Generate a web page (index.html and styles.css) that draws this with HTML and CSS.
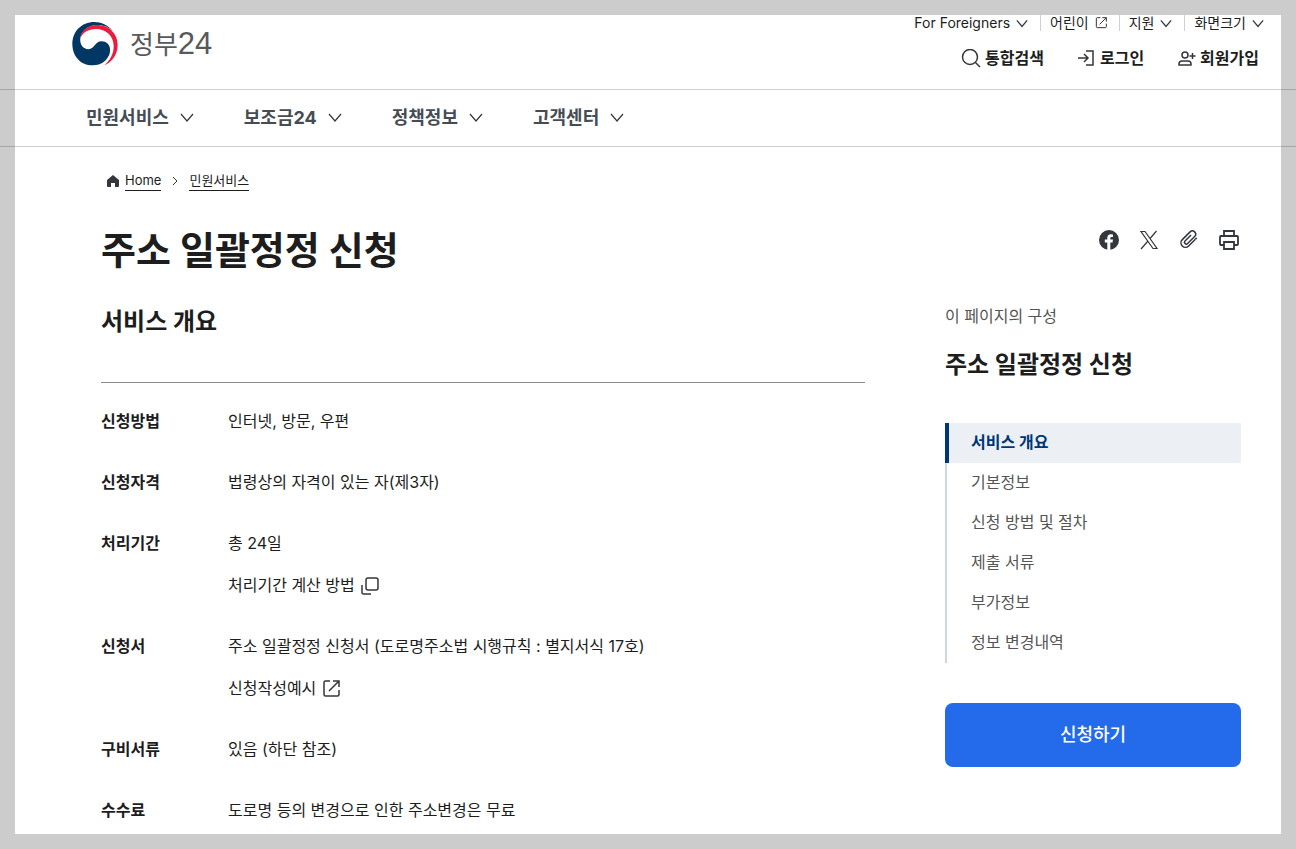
FILE: index.html
```html
<!DOCTYPE html>
<html lang="ko">

<head>
    <meta charset="UTF-8" />
    <meta name="viewport" content="width=device-width, initial-scale=1.0" />
    <title>주소 일괄정정 신청 | 정부24</title>
    <link rel="stylesheet" href="styles.css">
</head>

<body>
    <!-- Shared icons -->
    <svg class="sprite" aria-hidden="true">
        <symbol id="chevron" viewBox="0 0 14 14"><path d="M1 4l6 7 6-7" /></symbol>
        <symbol id="external" viewBox="0 0 18 18"><path d="M8 1H3.500Q2 1 2 2.500V14.500Q2 16 3.500 16H15.500Q17 16 17 14.500V10M11 1h6v6M17 1L7 11" /></symbol>
    </svg>

    <header class="header">
        <div class="header-top">
            <a href="#" class="logo">
                <svg class="logo-mark" viewBox="216 63 140 134" aria-hidden="true">
                    <path fill="#003764" d="M340 90C325 72 305 63 284 63C245 63 217 92 217 130C217 168 243 195 278 195C310 195 332 172 332 148C332 132 320 122 306 122C286 122 284 146 266 146C250 146 240 132 241 115C243 92 262 74 290 72C310 71 328 78 340 90Z" />
                    <path fill="#ed1c3e" d="M242 112C244 90 262 73 290 72C328 71 355 98 355 132C355 162 338 185 314 195C332 180 343 160 343 136C343 106 320 84 288 84C266 84 248 95 242 112Z" />
                </svg>
                <span class="logo-text">정부<span class="logo-num">24</span></span>
            </a>
            <div class="header-links">
                <div class="util">
                    <button type="button">For Foreigners <svg class="icon"><use href="#chevron" /></svg></button>
                    <a href="#">어린이 <svg class="icon"><use href="#external" /></svg></a>
                    <button type="button">지원 <svg class="icon"><use href="#chevron" /></svg></button>
                    <button type="button">화면크기 <svg class="icon"><use href="#chevron" /></svg></button>
                </div>
                <div class="account">
                    <button type="button"><svg class="icon search-icon" viewBox="0 0 20 20"><circle cx="9" cy="8" r="7.500" /><path d="M14.500 13.500L19 18" /></svg>통합검색</button>
                    <a href="#"><svg class="icon" viewBox="0 0 18 18"><path d="M0 8h10M6 4l4 4-4 4M8 1h7v14H8" /></svg>로그인</a>
                    <a href="#"><svg class="icon" viewBox="0 0 18 18"><circle cx="7" cy="5" r="3" /><path d="M1 15v-1Q1 11 4 11h6Q13 11 13 14v1zM14.500 3v6M11.500 6h6" /></svg>회원가입</a>
                </div>
            </div>
        </div>
        <nav class="nav">
            <button type="button">민원서비스 <svg class="icon"><use href="#chevron" /></svg></button>
            <button type="button">보조금24 <svg class="icon"><use href="#chevron" /></svg></button>
            <button type="button">정책정보 <svg class="icon"><use href="#chevron" /></svg></button>
            <button type="button">고객센터 <svg class="icon"><use href="#chevron" /></svg></button>
        </nav>
    </header>

    <div class="container">
        <div class="breadcrumb">
            <svg class="home-icon" viewBox="0 0 12 12" aria-hidden="true"><path d="M6 0L12 5V11Q12 12 11 12H8V8H4V12H1Q0 12 0 11V5Z" /></svg>
            <a href="#">Home</a>
            <svg class="icon crumb-arrow" viewBox="0 0 8 10" aria-hidden="true"><path d="M2 1l4 4-4 4" /></svg>
            <a href="#">민원서비스</a>
        </div>

        <div class="title-row">
            <h1>주소 일괄정정 신청</h1>
            <div class="share">
                <button type="button" aria-label="페이스북">
                    <svg viewBox="0 0 20 20"><circle cx="10" cy="10" r="10" fill="#33363d" /><path fill="#fff" d="M8.300 20V12.500H5.800V9.500H8.300V7.700Q8.300 4.200 11.800 4.200Q13 4.200 14 4.400V6.900H12.600Q11.300 6.900 11.300 8.200V9.500H14L13.500 12.500H11.300V20Z" /></svg>
                </button>
                <button type="button" aria-label="X">
                    <svg class="icon x-icon" viewBox="0 0 20 20"><path d="M2 1.500H6L18 18.500H14ZM17.500 1L11 8.500M9 11L2 19" /></svg>
                </button>
                <button type="button" aria-label="링크 복사">
                    <svg class="icon" viewBox="0 0 20 20"><g transform="rotate(45 10 10)"><path d="M14 5V14.500a4.500 4.500 0 0 1-9 0V3.500a3.250 3.250 0 0 1 6.500 0V13.500a1.800 1.800 0 0 1-3.600 0V5" /><path d="M14 5V3" /></g></svg>
                </button>
                <button type="button" aria-label="인쇄">
                    <svg class="icon print-icon" viewBox="0 0 20 20"><path d="M5 6V1H15V6M5 15H2Q1 15 1 14V7Q1 6 2 6H18Q19 6 19 7V14Q19 15 18 15H15M5 12H15V19H5Z" /></svg>
                </button>
            </div>
        </div>

        <div class="content">
            <main class="main">
                <h2>서비스 개요</h2>
                <dl class="info">
                    <div class="info-row">
                        <dt>신청방법</dt>
                        <dd>인터넷, 방문, 우편</dd>
                    </div>
                    <div class="info-row">
                        <dt>신청자격</dt>
                        <dd>법령상의 자격이 있는 자(제3자)</dd>
                    </div>
                    <div class="info-row">
                        <dt>처리기간</dt>
                        <dd>
                            <span>총 24일</span>
                            <button type="button">처리기간 계산 방법 <svg class="icon" viewBox="0 0 18 18"><rect x="5" y="1" width="12" height="12" rx="2" /><path d="M1 8v7.500Q1 17 2.500 17H10" /></svg></button>
                        </dd>
                    </div>
                    <div class="info-row">
                        <dt>신청서</dt>
                        <dd>
                            <span>주소 일괄정정 신청서 (도로명주소법 시행규칙 : 별지서식 17호)</span>
                            <a href="#">신청작성예시 <svg class="icon"><use href="#external" /></svg></a>
                        </dd>
                    </div>
                    <div class="info-row">
                        <dt>구비서류</dt>
                        <dd>있음 (하단 참조)</dd>
                    </div>
                    <div class="info-row">
                        <dt>수수료</dt>
                        <dd>도로명 등의 변경으로 인한 주소변경은 무료</dd>
                    </div>
                </dl>
            </main>

            <aside class="side">
                <p class="side-label">이 페이지의 구성</p>
                <h2>주소 일괄정정 신청</h2>
                <ul class="side-list">
                    <li><a href="#" class="active">서비스 개요</a></li>
                    <li><a href="#">기본정보</a></li>
                    <li><a href="#">신청 방법 및 절차</a></li>
                    <li><a href="#">제출 서류</a></li>
                    <li><a href="#">부가정보</a></li>
                    <li><a href="#">정보 변경내역</a></li>
                </ul>
                <button type="button" class="apply-btn">신청하기</button>
            </aside>
        </div>
    </div>
</body>

</html>
```

FILE: styles.css
```css
* {
    box-sizing: border-box;
}

body {
    margin: 0;
    padding-top: 15px;
    font-family: Inter, "Noto Sans CJK KR", sans-serif;
    font-size: 16px;
    line-height: 25px;
    color: #1d1d1d;
    background-color: #fff;
}

/* Translucent frame around the window */
body::after {
    content: "";
    position: fixed;
    inset: 0;
    border: 15px solid rgba(0, 0, 0, 0.2);
    pointer-events: none;
}

h1,
h2,
p,
ul,
dl,
dd {
    margin: 0;
    padding: 0;
}

a {
    color: inherit;
    text-decoration: none;
}

button {
    padding: 0;
    border: none;
    background: none;
    font: inherit;
    color: inherit;
    cursor: pointer;
}

.sprite {
    display: none;
}

.icon {
    flex: none;
    fill: none;
    stroke: #33363d;
    stroke-width: 1.5;
}

/* Header */
.header-top {
    display: flex;
    justify-content: space-between;
    height: 74px;
    padding: 0 32px 0 72px;
}

.logo {
    display: flex;
    align-items: center;
    gap: 12px;
    height: 58px;
}

.logo-mark {
    width: 46px;
    height: 44px;
}

.logo-text {
    font-size: 26px;
    color: #58595b;
}

.logo-num {
    font-family: "Liberation Sans", sans-serif;
    font-size: 31px;
}

.util,
.account {
    display: flex;
    justify-content: flex-end;
}

.util {
    font-size: 14px;
    line-height: 16px;
}

.util > * {
    display: flex;
    align-items: center;
    gap: 6px;
    padding: 0 12px 0 9px;
    border-left: 1px solid #cdd1d5;
}

.util > :first-child {
    border-left: none;
}

.util > :last-child {
    padding-right: 0;
}

.util .icon {
    width: 12px;
    height: 12px;
}

.account {
    gap: 34px;
    padding: 15px 5px 0 0;
    font-weight: bold;
}

.account > * {
    display: flex;
    align-items: center;
    gap: 4px;
}

.account .icon {
    width: 18px;
    height: 18px;
}

.account .search-icon {
    width: 20px;
    height: 20px;
}

.nav {
    display: flex;
    gap: 50px;
    height: 58px;
    padding: 0 86px 2px;
    border-top: 1px solid #cdd1d5;
    border-bottom: 1px solid #cdd1d5;
    font-size: 18px;
    font-weight: bold;
    color: #464c53;
}

.nav button {
    display: flex;
    align-items: center;
    gap: 11px;
}

.nav .icon {
    width: 14px;
    height: 14px;
    stroke-width: 1.2;
}

/* Page content */
.container {
    padding: 0 55px 0 101px;
}

.breadcrumb {
    display: flex;
    align-items: center;
    padding: 24px 6px 0;
    font-size: 13px;
    line-height: 19px;
}

.breadcrumb a {
    border-bottom: 1px solid #1d1d1d;
}

.home-icon {
    width: 12px;
    height: 12px;
    margin-right: 6px;
    fill: #33363d;
}

.crumb-arrow {
    width: 8px;
    height: 10px;
    margin: 0 10px;
    stroke-width: 1;
}

.title-row {
    display: flex;
    justify-content: space-between;
    padding-top: 34px;
}

h1 {
    font-size: 38px;
    line-height: 50px;
}

h2 {
    font-size: 24px;
    line-height: 36px;
}

.share {
    display: flex;
    gap: 20px;
    padding: 5px 2px 0 0;
}

.share button,
.share svg {
    display: block;
    width: 20px;
    height: 20px;
}

.share .x-icon {
    stroke-width: 1.2;
}

.share .print-icon {
    stroke-width: 1.8;
}

.content {
    display: flex;
    gap: 80px;
    padding-top: 29px;
}

.main {
    flex: 1;
}

.info {
    display: flex;
    flex-direction: column;
    gap: 36px;
    margin-top: 42px;
    padding: 26px 0 15px;
    border-top: 1px solid #8a8a8a;
}

.info-row {
    display: flex;
}

.info dt {
    width: 127px;
    font-weight: bold;
}

.info dd {
    display: flex;
    flex: 1;
    flex-direction: column;
    align-items: flex-start;
    gap: 17px;
}

.info dd button,
.info dd a {
    display: flex;
    align-items: center;
    gap: 6px;
}

.info .icon {
    width: 18px;
    height: 18px;
}

/* Sidebar */
.side {
    width: 296px;
}

.side-label {
    color: #555;
}

.side h2 {
    margin-top: 18px;
}

.side-list {
    margin: 40px 0;
    list-style: none;
}

.side-list a {
    display: block;
    padding: 0 0 2px 24px;
    border-left: 2px solid #cdd6e0;
    line-height: 38px;
    color: #555;
}

.side-list .active {
    padding-left: 22px;
    border-left: 4px solid #003675;
    background-color: #ecf0f5;
    font-weight: bold;
    color: #003675;
}

.apply-btn {
    width: 100%;
    height: 64px;
    padding-bottom: 2px;
    border-radius: 8px;
    background-color: #246beb;
    font-size: 18px;
    font-weight: 500;
    color: #fff;
}
```
